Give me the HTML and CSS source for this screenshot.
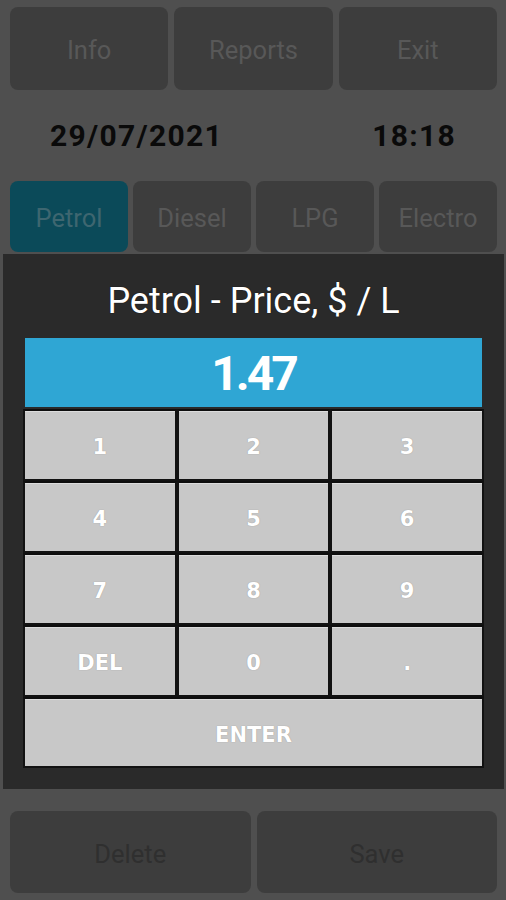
FILE: index.html
```html
<!DOCTYPE html>
<html lang="en">
<head>
    <meta charset="UTF-8">
    <meta name="viewport" content="width=device-width, initial-scale=1.0">
    <title>Fuel Price</title>
    <link rel="stylesheet" href="styles.css">
</head>
<body>
    <div class="screen">
        <div class="top-menu">
            <button class="btn">Info</button>
            <button class="btn">Reports</button>
            <button class="btn">Exit</button>
        </div>

        <div class="clock-row">
            <span class="date">29/07/2021</span>
            <span class="time">18:18</span>
        </div>

        <div class="fuel-tabs">
            <button class="btn tab active">Petrol</button>
            <button class="btn tab">Diesel</button>
            <button class="btn tab">LPG</button>
            <button class="btn tab">Electro</button>
        </div>

        <div class="spacer"></div>

        <div class="bottom-menu">
            <button class="btn dark-text">Delete</button>
            <button class="btn dark-text">Save</button>
        </div>

        <!-- price dialog over the dimmed screen -->
        <div class="dialog">
            <h2 class="dialog-title">Petrol - Price, $ / L</h2>
            <div class="display">1.47</div>
            <div class="keypad">
                <button class="key">1</button>
                <button class="key">2</button>
                <button class="key">3</button>
                <button class="key">4</button>
                <button class="key">5</button>
                <button class="key">6</button>
                <button class="key">7</button>
                <button class="key">8</button>
                <button class="key">9</button>
                <button class="key">DEL</button>
                <button class="key">0</button>
                <button class="key">.</button>
                <button class="key enter">ENTER</button>
            </div>
        </div>
    </div>
</body>
</html>
```

FILE: styles.css
```css
body {
    margin: 0;
    padding: 0;
    background-color: #4f4f4f;
    font-family: 'Roboto', 'Noto Sans', sans-serif;
}

.screen {
    position: relative;
    width: 506px;
    height: 900px;
    padding: 7px 9px 7px 10px;
    box-sizing: border-box;
    display: flex;
    flex-direction: column;
}

.btn {
    border: none;
    border-radius: 8px;
    background-color: #3d3d3d;
    color: #585858;
    font-family: inherit;
    font-size: 25.5px;
    padding: 3px 0 0;
}

.top-menu {
    display: grid;
    grid-template-columns: repeat(3, 1fr);
    gap: 6px;
    height: 83px;
}

.clock-row {
    display: flex;
    justify-content: space-between;
    align-items: center;
    height: 91px;
    padding: 0 41px 0 40px;
    font-weight: bold;
    font-size: 30px;
    letter-spacing: 1.3px;
    color: #0a0a0a;
}

.fuel-tabs {
    display: grid;
    grid-template-columns: repeat(4, 1fr);
    gap: 5px;
    height: 71px;
}

.tab.active {
    background-color: #0b4a59;
    color: #3e6670;
}

.spacer {
    flex: 1;
}

.bottom-menu {
    display: grid;
    grid-template-columns: 1fr 1fr;
    gap: 6px;
    height: 82px;
}

.dark-text {
    color: #2f2f2f;
}

.dialog {
    position: absolute;
    left: 3px;
    top: 254px;
    width: 501px;
    height: 535px;
    padding: 0 20px;
    box-sizing: border-box;
    background-color: #2a2a2a;
}

.dialog-title {
    margin: 28px 0 20px;
    height: 36px;
    line-height: 39px;
    text-align: center;
    font-weight: normal;
    font-size: 36px;
    color: #fff;
    text-shadow: 0 0 1px #000;
}

.display {
    margin: 0 2px 2px 2px;
    height: 69px;
    line-height: 71px;
    background-color: #2fa6d4;
    color: #fff;
    text-align: center;
    font-weight: bold;
    font-size: 48px;
    letter-spacing: -3px;
}

.keypad {
    display: grid;
    grid-template-columns: repeat(3, 1fr);
}

.key {
    height: 72px;
    border: 2px solid #121212;
    border-top-color: #0e0e0e;
    background-color: #c8c8c8;
    box-shadow: inset 0 1px 0 #dcdcdc;
    color: #fff;
    font-family: 'DejaVu Sans', sans-serif;
    font-weight: bold;
    font-size: 21px;
    padding: 4px 0 0;
    text-shadow: 0 0 1px #888;
}

.key.enter {
    grid-column: 1 / 4;
    height: 71px;
}
```
